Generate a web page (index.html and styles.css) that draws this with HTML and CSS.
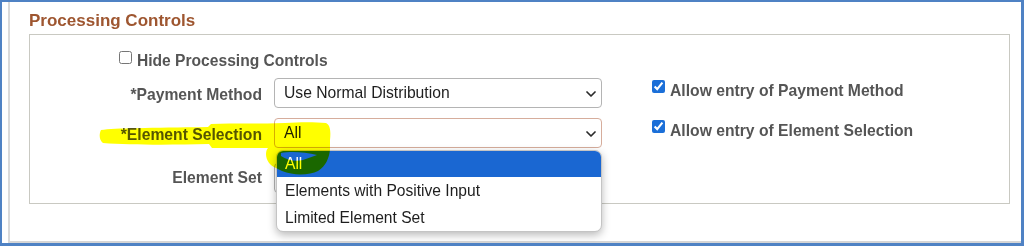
FILE: index.html
```html
<!DOCTYPE html>
<html lang="en">
<head>
<meta charset="utf-8">
<title>Processing Controls</title>
<link rel="stylesheet" href="styles.css">
</head>
<body>
<div class="frame">
  <div class="sheet">
    <h2 class="title">Processing Controls</h2>
    <div class="box">
      <label class="hide"><input type="checkbox" class="cb"><span class="txt">Hide Processing Controls</span></label>
      <div class="grid">
        <div class="lbl">*Payment Method</div>
        <div class="field">Use Normal Distribution<svg class="chev" width="10" height="6" viewBox="0 0 10 6"><path d="M1 1 L5 5 L9 1" fill="none" stroke="#2a2a2a" stroke-width="1.7" stroke-linecap="round" stroke-linejoin="round"/></svg></div>
        <label class="chk"><input type="checkbox" class="cb" checked><span class="txt">Allow entry of Payment Method</span></label>

        <div class="lbl">*Element Selection</div>
        <div class="field field-focus">All<svg class="chev" width="10" height="6" viewBox="0 0 10 6"><path d="M1 1 L5 5 L9 1" fill="none" stroke="#2a2a2a" stroke-width="1.7" stroke-linecap="round" stroke-linejoin="round"/></svg></div>
        <label class="chk"><input type="checkbox" class="cb" checked><span class="txt">Allow entry of Element Selection</span></label>

        <div class="lbl r3">Element Set</div>
        <div class="field field-set r3"></div>
        <div class="r3"></div>
      </div>
      <ul class="menu">
        <li class="opt opt-sel">All</li>
        <li class="opt">Elements with Positive Input</li>
        <li class="opt">Limited Element Set</li>
      </ul>
    </div>
  </div>
  <svg class="marker" width="1024" height="246" viewBox="0 0 1024 246">
    <path fill="#ffff00" fill-rule="evenodd" d="M101,130 C115,128 150,128 208,127 L211,124 C235,123 262,124 285,123 C300,122 315,122 326,123 C330,125 331,130 330,140 L330,150 C329,158 326,166 318,171 C310,175 294,176 282,171 L276,168 C270,166 266,160 266,154 C266,151 267,149 268,148 L212,148 L209,144 C170,145 130,145 103,143 C99,140 99,134 101,130 Z M281,153 C291,151 305,152 317,155 L303,160 C295,162 287,160 281,156 Z"/>
  </svg>
</div>
</body>
</html>
```

FILE: styles.css
```css
html, body {
  margin: 0;
  padding: 0;
  background: #ffffff;
}

body {
  font-family: "Liberation Sans", Arial, sans-serif;
}

.frame {
  position: relative;
  width: 1024px;
  height: 246px;
  box-sizing: border-box;
  border-style: solid;
  border-color: #4f82c4;
  border-width: 2px 3px 3px 2px;
  background: #ffffff;
  overflow: hidden;
}

.sheet {
  height: 241px;
  box-sizing: border-box;
  margin-left: 6px;
  border-left: 2px solid #dadada;
  border-bottom: 2px solid #d6d6d6;
  padding: 9px 0 0 19px;
}

.title {
  margin: 0;
  font-size: 17px;
  line-height: 20px;
  font-weight: bold;
  color: #9e5630;
}

.box {
  position: relative;
  margin-top: 3px;
  width: 981px;
  box-sizing: border-box;
  border: 1px solid #c9c9c2;
  padding: 16px 0 15px 0;
}

.hide {
  display: flex;
  align-items: flex-start;
  margin-left: 89px;
  font-size: 15.6px;
  font-weight: bold;
  color: #555555;
}

.cb {
  width: 13px;
  height: 13px;
  margin: 0 5px 0 0;
  flex: none;
}

.txt {
  display: block;
  line-height: 18px;
  margin-top: 1px;
}

.grid {
  margin-top: 8px;
  display: grid;
  grid-template-columns: 232px 328px 1fr;
  grid-auto-rows: 30px;
  column-gap: 12px;
  row-gap: 10px;
}

.r3 {
  margin-top: 5px;
}

.lbl {
  display: flex;
  justify-content: flex-end;
  align-items: center;
  box-sizing: border-box;
  padding-top: 4px;
  font-size: 15.7px;
  line-height: 18px;
  font-weight: bold;
  color: #555555;
  white-space: nowrap;
}

.field {
  position: relative;
  display: flex;
  align-items: center;
  box-sizing: border-box;
  height: 30px;
  border: 1px solid #b4b4b4;
  border-radius: 4px;
  padding-left: 9px;
  font-size: 15.7px;
  color: #1e1e1e;
  background: #ffffff;
}

.field-focus {
  border-color: #d6ad9c;
}

.field-set {
  width: 220px;
}

.chev {
  position: absolute;
  right: 5px;
  top: 12px;
}

.chk {
  display: flex;
  align-items: flex-start;
  padding: 2px 0 0 38px;
  font-size: 15.7px;
  font-weight: bold;
  color: #555555;
  white-space: nowrap;
}

.chk .txt {
  margin-top: 2px;
}

.cb:checked {
  accent-color: #1b6fd8;
}

.menu {
  position: absolute;
  left: 246px;
  top: 115px;
  width: 326px;
  margin: 0;
  padding: 0;
  list-style: none;
  box-sizing: border-box;
  border: 1px solid #c4c4c4;
  border-radius: 7px;
  overflow: hidden;
  background: #ffffff;
  box-shadow: 0 3px 9px rgba(0, 0, 0, 0.28);
  z-index: 5;
}

.opt {
  height: 27px;
  line-height: 27px;
  padding-left: 8px;
  font-size: 15.6px;
  color: #1e1e1e;
}

.opt-sel {
  height: 26px;
  line-height: 26px;
  background: #1a67d2;
  color: #ffffff;
}

.marker {
  position: absolute;
  left: -2px;
  top: -2px;
  z-index: 10;
  mix-blend-mode: multiply;
  pointer-events: none;
}
```
